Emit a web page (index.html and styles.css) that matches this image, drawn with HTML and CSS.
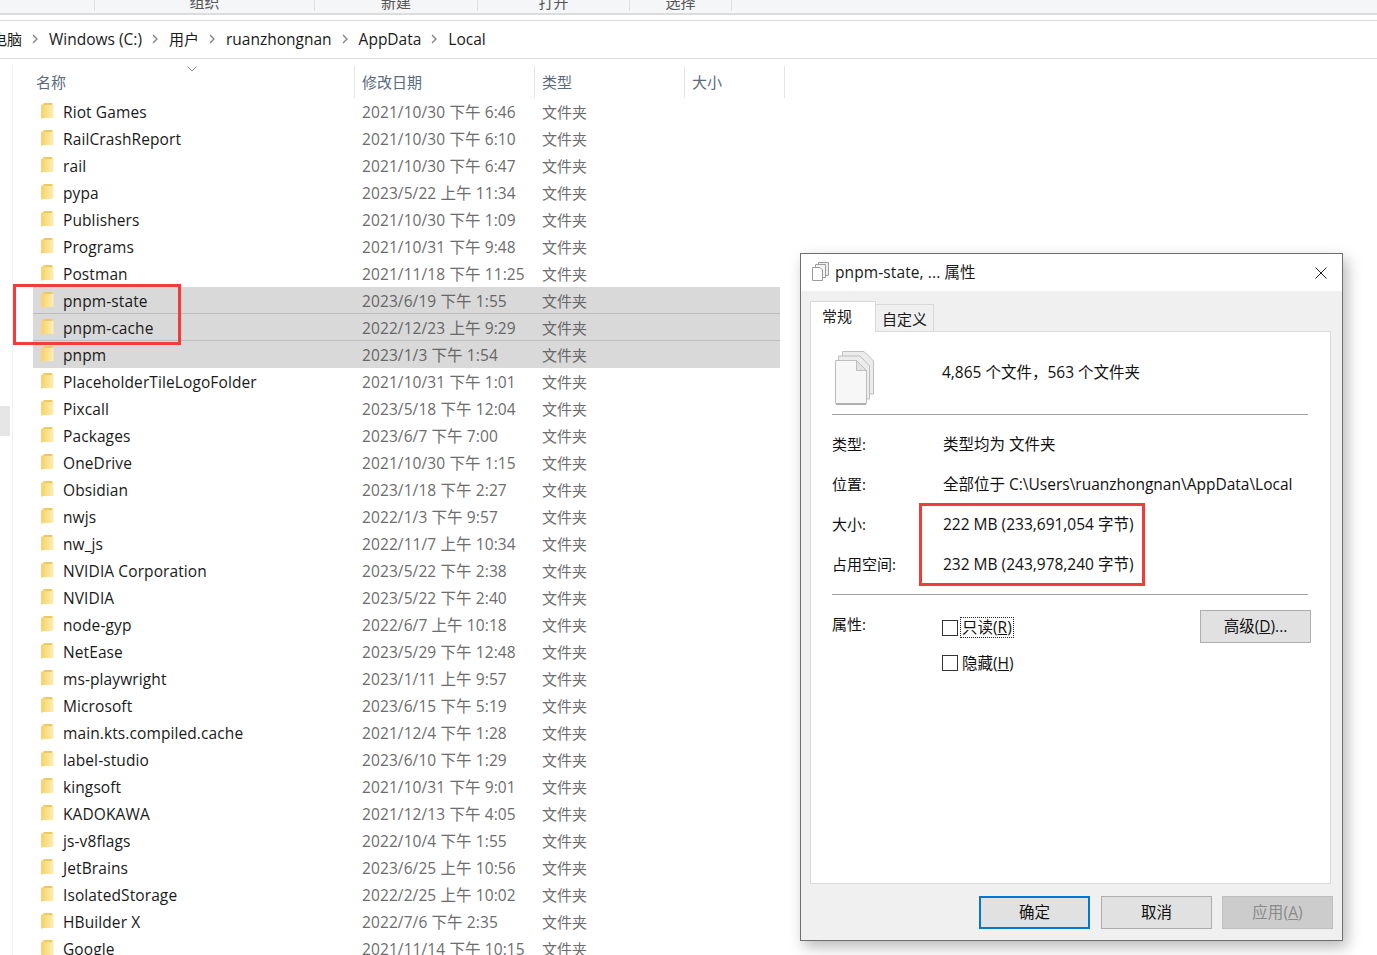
FILE: index.html
```html
<!DOCTYPE html>
<html lang="zh-CN">
<head>
<meta charset="utf-8">
<title>Local</title>
<link rel="stylesheet" href="styles.css">
</head>
<body>
<svg class="defs" width="0" height="0" aria-hidden="true">
  <defs>
    <linearGradient id="fold" x1="0" y1="0" x2="1" y2="0">
      <stop offset="0" stop-color="#f9d878"/><stop offset="1" stop-color="#fdeeb0"/>
    </linearGradient>
    <symbol id="folder" viewBox="0 0 13 16">
      <path d="M2.500 0H11.500V3H2.500Z" fill="#efc860"/>
      <path d="M2.500 2H12.500V15H2.500Z" fill="url(#fold)"/>
      <path d="M0 2 L3.300 .5 V14.500 L0 16 Z" fill="#f8d474"/>
    </symbol>
    <symbol id="chev" viewBox="0 0 8 10">
      <path d="M2 1l4 4-4 4" fill="none" stroke="#808080" stroke-width="1.300"/>
    </symbol>
    <symbol id="docs" viewBox="0 0 40 55">
      <g stroke="#bdbdbd" fill="#ececec">
        <path d="M7.500 1.500H29L38.500 11V44H7.500Z"/>
        <path d="M3.500 6H25L34.500 16V49H3.500Z"/>
        <path d="M.5 10.500H21.500L31.500 20.500V53.500H.5Z" fill="#f7f7f7"/>
        <path d="M21.500 10.500V20.500H31.500Z" fill="#e2e2e2"/>
      </g>
      <path d="M1 54.200H31" stroke="#a8a8a8" stroke-width="1.500"/>
    </symbol>
    <symbol id="docs-small" viewBox="0 0 17 19">
      <g stroke="#9c9c9c" fill="#fff">
        <path d="M6.500 .5H16.500V13.500H6.500Z" fill="#eee"/>
        <path d="M3.500 2.500H13.500V15.500H3.500Z" fill="#f4f4f4"/>
        <path d="M.5 5.500H8L10.500 8V18.500H.5Z"/>
      </g>
    </symbol>
  </defs>
</svg>

<header class="ribbon">
  <div class="group g1"></div>
  <div class="group g2">组织</div>
  <div class="group g3">新建</div>
  <div class="group g4">打开</div>
  <div class="group g5">选择</div>
</header>

<nav class="crumbs">
  <span class="crumb cjk first">电脑</span><svg class="chev"><use href="#chev"/></svg>
  <span class="crumb">Windows (C:)</span><svg class="chev"><use href="#chev"/></svg>
  <span class="crumb cjk">用户</span><svg class="chev"><use href="#chev"/></svg>
  <span class="crumb">ruanzhongnan</span><svg class="chev"><use href="#chev"/></svg>
  <span class="crumb">AppData</span><svg class="chev"><use href="#chev"/></svg>
  <span class="crumb">Local</span>
</nav>

<main class="explorer">
  <div class="thumb"></div>
  <div class="list">
    <div class="head">
      <div class="hname">名称<svg class="sort" width="10" height="6" viewBox="0 0 10 6"><path d="M.5.5L5 5 9.500.5" fill="none" stroke="#888"/></svg></div>
      <div class="hcol hdate">修改日期</div>
      <div class="hcol htype">类型</div>
      <div class="hcol hsize">大小</div>
    </div>
    <div class="row"><svg class="ico"><use href="#folder"/></svg><span class="nm">Riot Games</span><span class="dt">2021/10/30 下午 6:46</span><span class="ty">文件夹</span></div>
    <div class="row"><svg class="ico"><use href="#folder"/></svg><span class="nm">RailCrashReport</span><span class="dt">2021/10/30 下午 6:10</span><span class="ty">文件夹</span></div>
    <div class="row"><svg class="ico"><use href="#folder"/></svg><span class="nm">rail</span><span class="dt">2021/10/30 下午 6:47</span><span class="ty">文件夹</span></div>
    <div class="row"><svg class="ico"><use href="#folder"/></svg><span class="nm">pypa</span><span class="dt">2023/5/22 上午 11:34</span><span class="ty">文件夹</span></div>
    <div class="row"><svg class="ico"><use href="#folder"/></svg><span class="nm">Publishers</span><span class="dt">2021/10/30 下午 1:09</span><span class="ty">文件夹</span></div>
    <div class="row"><svg class="ico"><use href="#folder"/></svg><span class="nm">Programs</span><span class="dt">2021/10/31 下午 9:48</span><span class="ty">文件夹</span></div>
    <div class="row"><svg class="ico"><use href="#folder"/></svg><span class="nm">Postman</span><span class="dt">2021/11/18 下午 11:25</span><span class="ty">文件夹</span></div>
    <div class="row sel line"><svg class="ico"><use href="#folder"/></svg><span class="nm">pnpm-state</span><span class="dt">2023/6/19 下午 1:55</span><span class="ty">文件夹</span></div>
    <div class="row sel line"><svg class="ico"><use href="#folder"/></svg><span class="nm">pnpm-cache</span><span class="dt">2022/12/23 上午 9:29</span><span class="ty">文件夹</span></div>
    <div class="row sel"><svg class="ico"><use href="#folder"/></svg><span class="nm">pnpm</span><span class="dt">2023/1/3 下午 1:54</span><span class="ty">文件夹</span></div>
    <div class="row"><svg class="ico"><use href="#folder"/></svg><span class="nm">PlaceholderTileLogoFolder</span><span class="dt">2021/10/31 下午 1:01</span><span class="ty">文件夹</span></div>
    <div class="row"><svg class="ico"><use href="#folder"/></svg><span class="nm">Pixcall</span><span class="dt">2023/5/18 下午 12:04</span><span class="ty">文件夹</span></div>
    <div class="row"><svg class="ico"><use href="#folder"/></svg><span class="nm">Packages</span><span class="dt">2023/6/7 下午 7:00</span><span class="ty">文件夹</span></div>
    <div class="row"><svg class="ico"><use href="#folder"/></svg><span class="nm">OneDrive</span><span class="dt">2021/10/30 下午 1:15</span><span class="ty">文件夹</span></div>
    <div class="row"><svg class="ico"><use href="#folder"/></svg><span class="nm">Obsidian</span><span class="dt">2023/1/18 下午 2:27</span><span class="ty">文件夹</span></div>
    <div class="row"><svg class="ico"><use href="#folder"/></svg><span class="nm">nwjs</span><span class="dt">2022/1/3 下午 9:57</span><span class="ty">文件夹</span></div>
    <div class="row"><svg class="ico"><use href="#folder"/></svg><span class="nm">nw_js</span><span class="dt">2022/11/7 上午 10:34</span><span class="ty">文件夹</span></div>
    <div class="row"><svg class="ico"><use href="#folder"/></svg><span class="nm">NVIDIA Corporation</span><span class="dt">2023/5/22 下午 2:38</span><span class="ty">文件夹</span></div>
    <div class="row"><svg class="ico"><use href="#folder"/></svg><span class="nm">NVIDIA</span><span class="dt">2023/5/22 下午 2:40</span><span class="ty">文件夹</span></div>
    <div class="row"><svg class="ico"><use href="#folder"/></svg><span class="nm">node-gyp</span><span class="dt">2022/6/7 上午 10:18</span><span class="ty">文件夹</span></div>
    <div class="row"><svg class="ico"><use href="#folder"/></svg><span class="nm">NetEase</span><span class="dt">2023/5/29 下午 12:48</span><span class="ty">文件夹</span></div>
    <div class="row"><svg class="ico"><use href="#folder"/></svg><span class="nm">ms-playwright</span><span class="dt">2023/1/11 上午 9:57</span><span class="ty">文件夹</span></div>
    <div class="row"><svg class="ico"><use href="#folder"/></svg><span class="nm">Microsoft</span><span class="dt">2023/6/15 下午 5:19</span><span class="ty">文件夹</span></div>
    <div class="row"><svg class="ico"><use href="#folder"/></svg><span class="nm">main.kts.compiled.cache</span><span class="dt">2021/12/4 下午 1:28</span><span class="ty">文件夹</span></div>
    <div class="row"><svg class="ico"><use href="#folder"/></svg><span class="nm">label-studio</span><span class="dt">2023/6/10 下午 1:29</span><span class="ty">文件夹</span></div>
    <div class="row"><svg class="ico"><use href="#folder"/></svg><span class="nm">kingsoft</span><span class="dt">2021/10/31 下午 9:01</span><span class="ty">文件夹</span></div>
    <div class="row"><svg class="ico"><use href="#folder"/></svg><span class="nm">KADOKAWA</span><span class="dt">2021/12/13 下午 4:05</span><span class="ty">文件夹</span></div>
    <div class="row"><svg class="ico"><use href="#folder"/></svg><span class="nm">js-v8flags</span><span class="dt">2022/10/4 下午 1:55</span><span class="ty">文件夹</span></div>
    <div class="row"><svg class="ico"><use href="#folder"/></svg><span class="nm">JetBrains</span><span class="dt">2023/6/25 上午 10:56</span><span class="ty">文件夹</span></div>
    <div class="row"><svg class="ico"><use href="#folder"/></svg><span class="nm">IsolatedStorage</span><span class="dt">2022/2/25 上午 10:02</span><span class="ty">文件夹</span></div>
    <div class="row"><svg class="ico"><use href="#folder"/></svg><span class="nm">HBuilder X</span><span class="dt">2022/7/6 下午 2:35</span><span class="ty">文件夹</span></div>
    <div class="row"><svg class="ico"><use href="#folder"/></svg><span class="nm">Google</span><span class="dt">2021/11/14 下午 10:15</span><span class="ty">文件夹</span></div>
  </div>
</main>

<div class="mark mark-list"></div>

<section class="dialog">
  <div class="titlebar">
    <svg class="title-ico"><use href="#docs-small"/></svg>
    <span class="title">pnpm-state, ... 属性</span>
    <svg class="close" width="12" height="12" viewBox="0 0 12 12"><path d="M.5.5l11 11M11.500.5l-11 11" stroke="#222" fill="none"/></svg>
  </div>
  <div class="dlg-body">
    <div class="tabs">
      <div class="tab active">常规</div>
      <div class="tab">自定义</div>
    </div>
    <div class="panel">
      <div class="summary">
        <svg class="big-ico"><use href="#docs"/></svg>
        <span>4,865 个文件，563 个文件夹</span>
      </div>
      <hr class="rule">
      <div class="props">
        <span>类型:</span><span>类型均为 文件夹</span>
        <span>位置:</span><span>全部位于 C:\Users\ruanzhongnan\AppData\Local</span>
        <span>大小:</span><span>222 MB (233,691,054 字节)</span>
        <span>占用空间:</span><span>232 MB (243,978,240 字节)</span>
      </div>
      <hr class="rule rule2">
      <div class="attrs">
        <span class="attr-label">属性:</span>
        <div class="checks">
          <div class="check"><i class="box"></i><span class="focus">只读(<u>R</u>)</span></div>
          <div class="check"><i class="box"></i><span class="plain">隐藏(<u>H</u>)</span></div>
        </div>
        <div class="btn adv">高级(<u>D</u>)...</div>
      </div>
    </div>
    <div class="actions">
      <div class="btn act primary">确定</div>
      <div class="btn act">取消</div>
      <div class="btn act off">应用(<u>A</u>)</div>
    </div>
  </div>
</section>

<div class="mark mark-size"></div>
</body>
</html>
```
FILE: styles.css
```css
* { box-sizing: border-box; }
html, body { margin: 0; height: 955px; overflow: hidden; background: #fff; }
body {
  position: relative;
  width: 1377px;
  font-family: "Open Sans", "Noto Sans CJK SC", sans-serif;
  font-size: 15.5px;
  letter-spacing: .1px;
  color: #1a1a1a;
}
.defs { position: absolute; }

.ribbon {
  display: flex;
  height: 15px;
  background: #f5f6f7;
  border-bottom: 2px solid #dcdcdc;
  overflow: hidden;
  font-size: 15px;
  color: #555;
  line-height: 13px;
}
.group {
  margin-top: -4px;
  height: 15px;
  border-right: 1px solid #dfe0e1;
  text-align: center;
}
.g1 { width: 95px; }
.g2 { width: 220px; }
.g3 { width: 163px; }
.g4 { width: 152px; }
.g5 { width: 102px; }

.crumbs {
  display: flex;
  align-items: center;
  height: 39px;
  margin-top: 5px;
  border-top: 1px solid #dcdcdc;
  border-bottom: 1px solid #dcdcdc;
  padding-bottom: 2px;
  overflow: hidden;
}
.crumb { white-space: nowrap; font-size: 15.5px; letter-spacing: 0; }
.crumb.cjk { font-size: 15px; }
.crumb.first { margin-left: -8px; }
.chev { width: 8px; height: 10px; margin: 0 10px 0 9px; flex: none; }

.explorer { display: flex; height: 896px; }
.thumb {
  position: absolute;
  left: 0;
  top: 406px;
  width: 10px;
  height: 30px;
  background: #e6e6e6;
}
.list {
  margin-left: 12px;
  border-left: 1px solid #f0f0f0;
  padding-left: 20px;
  margin-top: 7px;
  width: 790px;
  flex: none;
}
.head {
  display: flex;
  height: 32px;
  color: #5a6a80;
  font-size: 15px;
  letter-spacing: 0;
  line-height: 32px;
}
.hname { position: relative; width: 321px; padding-left: 3px; flex: none; }
.sort { position: absolute; left: 154px; top: 0; }
.hcol { border-left: 1px solid #e5e5e5; padding-left: 7px; flex: none; }
.hdate { width: 180px; }
.htype { width: 150px; }
.hsize { width: 101px; border-right: 1px solid #e5e5e5; }

.row {
  display: flex;
  align-items: center;
  height: 27px;
  width: 747px;
  white-space: nowrap;
}
.ico { width: 13px; height: 16px; margin-left: 8px; margin-top: -1px; flex: none; }
.nm { width: 299px; margin-left: 9px; flex: none; color: #1a1a1a; }
.dt { width: 180px; flex: none; color: #6d6d6d; }
.ty { color: #6d6d6d; font-size: 15px; letter-spacing: 0; }
.row.sel { background: #d9d9d9; }
.row.line { box-shadow: inset 0 -1px 0 #bcbcbc; }
.row.sel .dt, .row.sel .ty { color: #666; }

.mark {
  position: absolute;
  border: 3px solid #f33b3b;
  pointer-events: none;
}
.mark-list { left: 13px; top: 284px; width: 168px; height: 61px; }
.mark-size { left: 919px; top: 503px; width: 226px; height: 83px; }

.dialog {
  position: absolute;
  left: 800px;
  top: 253px;
  width: 543px;
  height: 688px;
  display: flex;
  flex-direction: column;
  border: 1px solid #6e6e6e;
  background: #f0f0f0;
  box-shadow: 4px 6px 14px rgba(0, 0, 0, .28);
}
.titlebar {
  display: flex;
  align-items: center;
  flex: none;
  height: 37px;
  background: #fff;
  padding: 0 15px 2px 11px;
  color: #1a1a1a;
}
.title-ico { width: 17px; height: 19px; flex: none; }
.title { margin-left: 6px; flex: 1; }
.close { margin-top: 2px; }
.dlg-body { flex: 1; display: flex; flex-direction: column; padding: 10px 9px 0; }
.tabs { display: flex; align-items: flex-end; height: 31px; flex: none; position: relative; z-index: 1; }
.tab {
  width: 58px;
  height: 28px;
  background: #f0f0f0;
  border: 1px solid #d9d9d9;
  border-left: 0;
  text-align: center;
  font-size: 15px;
  letter-spacing: 0;
  line-height: 28px;
}
.tab.active {
  width: 66px;
  height: 31px;
  padding-left: 11px;
  text-align: left;
  background: #fff;
  border-left: 1px solid #d9d9d9;
  border-bottom: 0;
  line-height: 28px;
}
.panel {
  height: 553px;
  flex: none;
  margin-top: -1px;
  margin-right: 2px;
  width: 521px;
  background: #fff;
  border: 1px solid #d9d9d9;
  padding: 0 22px 0 21px;
  letter-spacing: 0;
  color: #111;
}
.summary { display: flex; align-items: center; height: 82px; padding-bottom: 4px; }
.big-ico { width: 40px; height: 55px; margin-left: 3px; margin-top: 13px; flex: none; }
.summary span { margin-left: 67px; }
.rule { margin: 0; border: 0; border-top: 1px solid #a0a0a0; width: 476px; }
.props {
  display: grid;
  grid-template-columns: 111px 1fr;
  grid-auto-rows: 40px;
  align-items: center;
  padding-top: 8px;
  padding-bottom: 2px;
  white-space: nowrap;
}
.props span:nth-child(odd) { font-size: 15px; }
.rule2 { margin-top: 9px; }
.attrs { display: flex; position: relative; padding-top: 18px; }
.attr-label { width: 110px; flex: none; font-size: 15px; }
.checks { display: flex; flex-direction: column; gap: 14px; padding-top: 4px; flex: 1; }
.check { display: flex; align-items: center; height: 21px; }
.box { width: 16px; height: 16px; border: 1px solid #333; background: #fff; flex: none; }
.focus { margin-left: 3px; outline: 1px dotted #222; line-height: 19px; padding: 0 1px; }
.plain { margin-left: 4px; }
.btn {
  display: flex;
  align-items: center;
  justify-content: center;
  padding-bottom: 2px;
  background: #e1e1e1;
  border: 1px solid #adadad;
  color: #111;
}
.adv { position: absolute; left: 368px; top: 15px; width: 111px; height: 33px; }
.actions { display: flex; justify-content: flex-end; gap: 10px; margin-top: 12px; }
.act { width: 111px; height: 33px; }
.primary { border: 2px solid #0078d7; margin-right: 1px; }
.off { background: #cccccc; border-color: #bfbfbf; color: #8a8a8a; }
```
